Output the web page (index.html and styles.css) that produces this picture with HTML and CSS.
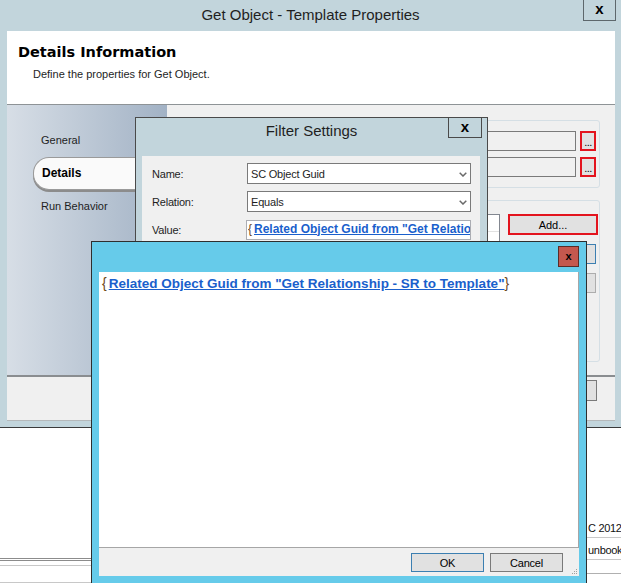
FILE: index.html
```html
<!DOCTYPE html>
<html>
<head>
<meta charset="utf-8">
<title>Get Object - Template Properties</title>
<link rel="stylesheet" href="styles.css">
</head>
<body>
<div class="desk">
  <div class="win-main">
    <div class="titlebar">
      <span class="title">Get Object - Template Properties</span>
      <div class="close-main">x</div>
    </div>
    <div class="frame">
      <div class="header">
        <div class="h-title">Details Information</div>
        <div class="h-sub">Define the properties for Get Object.</div>
      </div>
      <div class="body">
        <div class="nav">
          <div class="nav-item">General</div>
          <div class="nav-item active">Details</div>
          <div class="nav-item">Run Behavior</div>
        </div>
        <div class="content">
          <div class="group g1">
            <div class="row"><div class="tb"></div><div class="dots">...</div></div>
            <div class="row"><div class="tb"></div><div class="dots">...</div></div>
          </div>
          <div class="group g2">
            <div class="list"><div class="list-head"></div></div>
            <div class="btncol">
              <div class="btn add">Add...</div>
              <div class="btn sub focus"></div>
              <div class="btn sub"></div>
            </div>
          </div>
        </div>
      </div>
      <div class="sep"></div>
      <div class="footer"><div class="btn fbtn"></div></div>
    </div>
  </div>

  <div class="desk-bottom">
    <div class="bl">
      <div class="bl-line dark"></div>
      <div class="bl-line dark gap1"></div>
      <div class="bl-line light gap4"></div>
      <div class="bl-line light gap16"></div>
    </div>
    <div class="br">
      <div class="br-text">C 2012</div>
      <div class="br-line"></div>
      <div class="br-text t2">unbook</div>
      <div class="br-line"></div>
      <div class="br-line l3"></div>
    </div>
  </div>

  <div class="win-filter">
    <div class="f-title">Filter Settings</div>
    <div class="f-close">x</div>
    <div class="f-panel">
      <div class="f-row">
        <div class="f-label">Name:</div>
        <div class="combo"><span>SC Object Guid</span>
          <svg class="chev" width="8" height="5" viewBox="0 0 8 5"><polyline points="0.7,0.7 4,4 7.3,0.7" fill="none" stroke="#6a6a6a" stroke-width="1.5"/></svg>
        </div>
      </div>
      <div class="f-row">
        <div class="f-label">Relation:</div>
        <div class="combo"><span>Equals</span>
          <svg class="chev" width="8" height="5" viewBox="0 0 8 5"><polyline points="0.7,0.7 4,4 7.3,0.7" fill="none" stroke="#6a6a6a" stroke-width="1.5"/></svg>
        </div>
      </div>
      <div class="f-row">
        <div class="f-label">Value:</div>
        <div class="value"><div class="value-inner"><span class="brace">{</span><span class="link">Related Object Guid from "Get Relationship - SR to Template"</span><span class="brace">}</span></div></div>
      </div>
    </div>
  </div>

  <div class="win-edit">
    <div class="e-close">x</div>
    <div class="e-text"><span class="brace">{</span><span class="link">Related Object Guid from "Get Relationship - SR to Template"</span><span class="brace">}</span></div>
    <div class="e-bar">
      <div class="btn ok">OK</div>
      <div class="btn cancel">Cancel</div>
      <svg class="grip" width="7" height="7" viewBox="0 0 7 7">
        <rect x="5" y="1" width="1" height="1" fill="#a0a0a0"/>
        <rect x="3" y="3" width="1" height="1" fill="#a0a0a0"/>
        <rect x="5" y="3" width="1" height="1" fill="#a0a0a0"/>
        <rect x="1" y="5" width="1" height="1" fill="#a0a0a0"/>
        <rect x="3" y="5" width="1" height="1" fill="#a0a0a0"/>
        <rect x="5" y="5" width="1" height="1" fill="#a0a0a0"/>
      </svg>
    </div>
  </div>
</div>
</body>
</html>
```

FILE: styles.css
```css
* { box-sizing: border-box; }
html, body { margin: 0; padding: 0; }
body {
  width: 621px;
  height: 583px;
  overflow: hidden;
  background: #ffffff;
  font-family: "Liberation Sans", Arial, sans-serif;
  font-size: 11px;
  color: #1e1e1e;
}
.desk { position: relative; width: 621px; height: 583px; overflow: hidden; }

/* ---------- main window ---------- */
.win-main {
  position: relative;
  height: 428px;
  background: #c2d5dc;
  border-bottom: 1px solid #3a3a3a;
  display: flex;
  flex-direction: column;
}
.titlebar {
  height: 31px;
  display: flex;
  align-items: center;
  justify-content: center;
  font-size: 15px;
  color: #1f1f1f;
  padding-bottom: 2px;
}
.close-main {
  position: absolute;
  top: 0;
  right: 5px;
  width: 33px;
  height: 21px;
  border: 1px solid #5d676c;
  border-top: none;
  display: flex;
  align-items: center;
  justify-content: center;
  font: bold 15px "Liberation Sans", Arial, sans-serif;
  padding-bottom: 3px;
  color: #000;
}
.frame {
  margin: 0 6px 0 7px;
  display: flex;
  flex-direction: column;
}
.header {
  height: 74px;
  background: #ffffff;
  border-bottom: 1px solid #8e9396;
  padding: 12px 0 0 11px;
}
.h-title {
  font: bold 14.5px "DejaVu Sans", sans-serif;
  line-height: 18px;
  color: #000;
}
.h-sub {
  margin: 6px 0 0 15px;
  line-height: 14px;
  color: #1e1e1e;
}
.body { height: 270px; display: flex; }
.nav {
  width: 160px;
  background: linear-gradient(to right, #d7dee6, #a2b2c5);
  padding-top: 19px;
}
.nav-item {
  height: 33px;
  line-height: 33px;
  padding-left: 34px;
  color: #1e1e1e;
}
.nav-item.active {
  margin-left: 26px;
  padding-left: 8px;
  background: #fafafa;
  border: 1px solid #9a9a9a;
  border-right: none;
  border-radius: 16px 0 0 16px;
  box-shadow: 0 2px 0 #8c8c8c;
  font-weight: bold;
  font-size: 12px;
  line-height: 30px;
  color: #000;
}
.content {
  flex: 1;
  background: #f0f0f0;
  padding: 15px 15px 0 12px;
  display: flex;
  flex-direction: column;
}
.group {
  border: 1px solid #d5dfe5;
  border-radius: 3px;
}
.g1 {
  padding: 10px 3px 10px 12px;
  display: flex;
  flex-direction: column;
  gap: 6px;
}
.row { display: flex; height: 20px; }
.tb {
  flex: 1;
  height: 20px;
  border: 1px solid #7a7a7a;
  background: #f0f0f0;
}
.dots {
  margin-left: 4px;
  width: 16px;
  height: 20px;
  border: 2px solid #e3141e;
  background: #e1e1e1;
  text-align: center;
  line-height: 19px;
  color: #000;
  letter-spacing: -0.5px;
}
.g2 {
  margin-top: 12px;
  height: 162px;
  padding: 13px 1px 0 12px;
  display: flex;
}
.list {
  flex: 1;
  height: 130px;
  background: #ffffff;
  border: 1px solid #828790;
  margin-right: 8px;
}
.list-head { height: 17px; border-bottom: 1px solid #e2e2e2; }
.btncol {
  width: 90px;
  display: flex;
  flex-direction: column;
  align-items: flex-end;
}
.btn {
  background: #e1e1e1;
  border: 1px solid #adadad;
  display: flex;
  align-items: center;
  justify-content: center;
  color: #000;
}
.add {
  width: 90px;
  height: 21px;
  border: 2px solid #e3141e;
}
.sub {
  width: 86px;
  height: 20px;
  margin: 9px 2px 0 0;
}
.focus { border-color: #3c7fb1; }
.sep { height: 2px; background: #8a8d90; }
.footer {
  height: 44px;
  background: #f0f0f0;
  border-bottom: 1px solid #b4b8ba;
  padding: 3px 18px 0 0;
  display: flex;
  justify-content: flex-end;
  align-items: flex-start;
}
.fbtn { width: 75px; height: 21px; border-color: #7a7a7a; }

/* ---------- desktop behind ---------- */
.desk-bottom {
  height: 155px;
  display: flex;
  justify-content: space-between;
}
.bl { width: 91px; padding-top: 130px; }
.bl-line { height: 1px; }
.bl-line.dark { background: #8c8c8c; }
.bl-line.light { background: #c8c8c8; }
.gap1 { margin-top: 1px; }
.gap4 { margin-top: 4px; }
.gap16 { margin-top: 16px; }
.br { width: 34px; padding-top: 93px; overflow: hidden; }
.br-text {
  line-height: 14px;
  white-space: nowrap;
  padding-left: 1px;
  color: #111;
  letter-spacing: -0.3px;
}
.br-line { height: 1px; background: #c8c8c8; margin-top: 2px; }
.br-text.t2 { margin-top: 5px; }
.br-line.l3 { margin-top: 13px; background: #b0b0b0; }

/* ---------- filter settings window ---------- */
.win-filter {
  position: absolute;
  left: 135px;
  top: 117px;
  width: 353px;
  height: 220px;
  border: 1px solid #4a4a4a;
  background: #c2d5dc;
}
.f-title {
  height: 38px;
  padding-top: 1px;
  line-height: 24px;
  text-align: center;
  font-size: 15px;
  color: #1f1f1f;
}
.f-close {
  position: absolute;
  top: -1px;
  right: 5px;
  width: 34px;
  height: 21px;
  border: 1px solid #4a4a4a;
  display: flex;
  align-items: center;
  justify-content: center;
  font: bold 15px "Liberation Sans", Arial, sans-serif;
  padding-bottom: 3px;
  color: #000;
}
.f-panel {
  margin: 0 7px 0 6px;
  height: 180px;
  background: #f0f0f0;
  padding: 7px 9px 0 10px;
  display: flex;
  flex-direction: column;
  gap: 7px;
}
.f-row { display: flex; align-items: center; height: 21px; }
.f-label { width: 95px; letter-spacing: -0.2px; }
.combo {
  flex: 1;
  height: 21px;
  border: 1px solid #7a7a7a;
  background: #ffffff;
  display: flex;
  align-items: center;
  justify-content: space-between;
  padding: 0 3px 0 3px;
  letter-spacing: -0.2px;
}
.chev { display: block; margin-top: 1px; }
.value {
  flex: 1;
  min-width: 0;
  height: 20px;
  margin-left: -1px;
  border: 1px solid #abadb3;
  background: #ffffff;
  padding-left: 1px;
  display: flex;
}
.value-inner {
  flex: 1;
  min-width: 0;
  white-space: nowrap;
  overflow: hidden;
  line-height: 17px;
}
.brace {
  font: 12px "Liberation Sans", Arial, sans-serif;
  color: #6e4718;
}
.brace:first-child { margin-right: 2px; }
.link {
  font: bold 12px "Liberation Sans", Arial, sans-serif;
  color: #1a5fcc;
  text-decoration: underline;
}

/* ---------- edit window ---------- */
.win-edit {
  position: absolute;
  left: 91px;
  top: 241px;
  width: 496px;
  height: 360px;
  border: 1px solid #2e2e2e;
  background: #66cbea;
  padding: 30px 7px 0 7px;
}
.e-close {
  position: absolute;
  top: 4px;
  right: 7px;
  width: 21px;
  height: 21px;
  background: #c4584e;
  border: 1px solid #5a2c28;
  display: flex;
  align-items: center;
  justify-content: center;
  font: bold 11px "Liberation Sans", Arial, sans-serif;
  padding-bottom: 2px;
  color: #000;
}
.e-text {
  height: 276px;
  background: #ffffff;
  border-right: 1px solid #a6a6a6;
  border-bottom: 1px solid #a6a6a6;
  padding: 3px 3px;
  line-height: 18px;
  white-space: nowrap;
}
.e-text .brace { font-size: 14px; }
.e-text .link { font-size: 13.5px; }
.e-bar {
  position: relative;
  height: 28px;
  background: #f0f0f0;
  display: flex;
  justify-content: flex-end;
  gap: 6px;
  padding: 5px 16px 0 0;
}
.ok, .cancel {
  width: 73px;
  height: 19px;
  letter-spacing: -0.2px;
}
.ok { border-color: #3c7fb1; }
.cancel { border-color: #7a7a7a; }
.grip { position: absolute; right: 1px; bottom: 1px; }
```
